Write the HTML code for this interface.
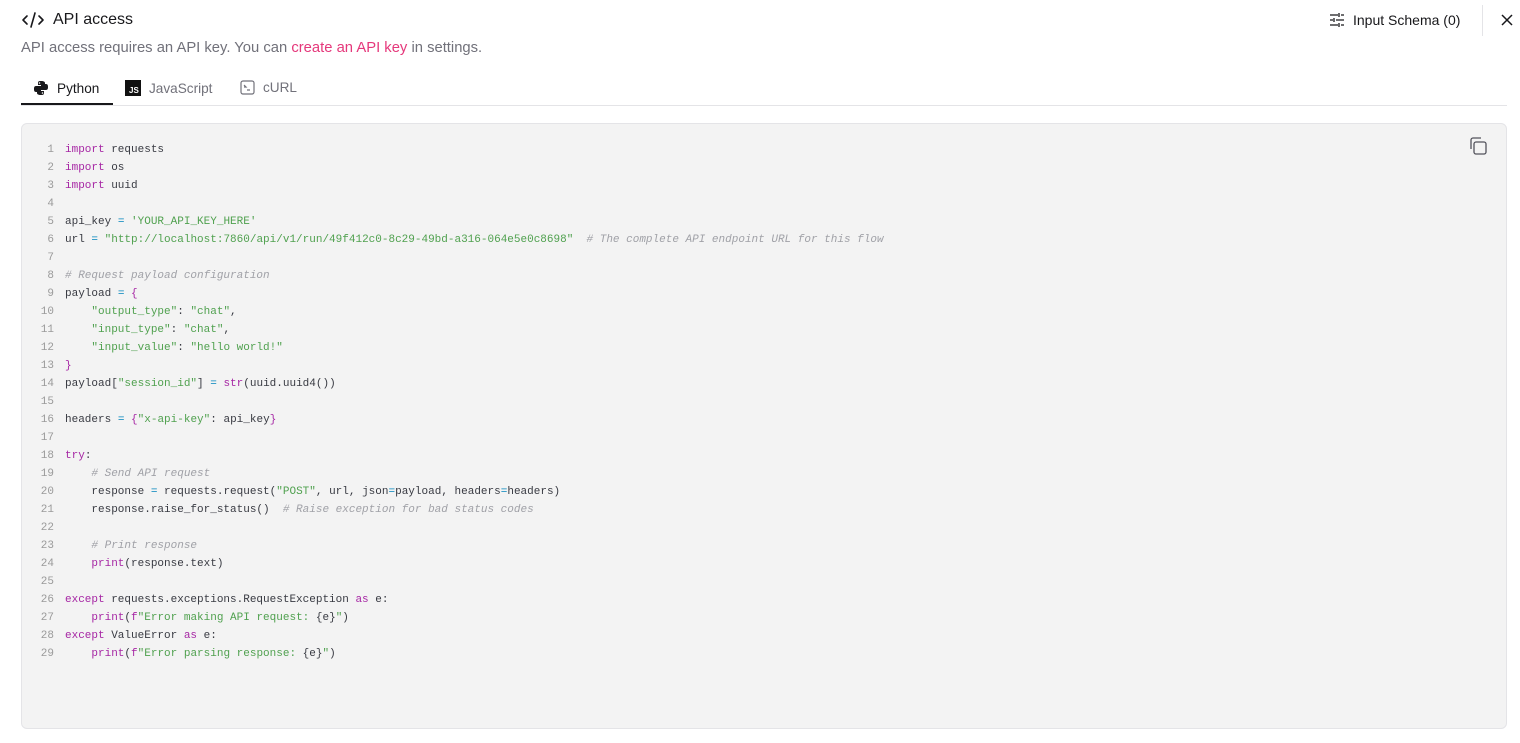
<!DOCTYPE html>
<html><head><meta charset="utf-8"><style>
*{margin:0;padding:0;box-sizing:border-box}
body{width:1520px;height:743px;background:#fff;font-family:"Liberation Sans",sans-serif;color:#18181b;position:relative;overflow:hidden}
.a{position:absolute}
.code{position:absolute;left:21px;top:123px;width:1486px;height:606px;background:#f3f3f3;border:1px solid #e4e4e7;border-radius:6px}
pre{position:absolute;left:0;top:17px;font-family:"Liberation Mono",monospace;font-size:11px;line-height:18px;color:#383a42}
.n{display:inline-block;width:32px;text-align:right;color:#9a9a9a;margin-right:11px}
.k{color:#a626a4}.s{color:#50a14f}.c{color:#a0a1a7;font-style:italic}.o{color:#0184bc}
.tab{position:absolute;top:80px;font-size:13.6px;color:#71717a;display:flex;align-items:center;gap:8px}
</style></head><body>
<svg class="a" style="left:21px;top:11px" width="24" height="18" viewBox="0 0 24 18" fill="none" stroke="#18181b" stroke-width="1.6" stroke-linecap="round" stroke-linejoin="round"><path d="M6 5 2 9l4 4M18 5l4 4-4 4M14 2 10 16"/></svg>
<div class="a" style="left:53px;top:11px;font-size:16px;color:#18181b">API access</div>
<div class="a" style="left:21px;top:40px;font-size:14.8px;color:#71717a">API access requires an API key. You can <span style="color:#e5387b">create an API key</span> in settings.</div>
<svg class="a" style="left:1329px;top:12px" width="16" height="16" viewBox="0 0 16 16" stroke="#18181b" stroke-width="1.3" fill="none"><path d="M1 3h8M12 3h3M10 1v4M1 8h3M7 8h8M5 6v4M1 13h8M12 13h3M10 11v4"/></svg>
<div class="a" style="left:1353px;top:12px;font-size:14px;color:#18181b">Input Schema (0)</div>
<div class="a" style="left:1482px;top:5px;width:1px;height:31px;background:#e4e4e7"></div>
<svg class="a" style="left:1500px;top:13px" width="14" height="14" viewBox="0 0 14 14" stroke="#18181b" stroke-width="1.5"><path d="M2 2l10 10M12 2 2 12"/></svg>
<div class="tab" style="left:33px;color:#18181b"><svg width="16" height="16" viewBox="0 0 16 16" fill="#18181b"><path d="M8 1C5 1 5 2 5 3v2h3v1H3C1 6 1 8 1 9s0 3 2 3h1v-2c0-1 1-2 2-2h4c1 0 2-1 2-2V3c0-1-1-2-4-2zM6.5 2.2a.8.8 0 110 1.6.8.8 0 010-1.6zM8 15c3 0 3-1 3-2v-2H8v-1h5c2 0 2-2 2-3s0-3-2-3h-1v2c0 1-1 2-2 2H6c-1 0-2 1-2 2v3c0 1 1 2 4 2zm1.5-1.2a.8.8 0 110-1.6.8.8 0 010 1.6z"/></svg>Python</div>
<div class="tab" style="left:125px"><span style="display:inline-block;width:16px;height:16px;background:#111;color:#fff;font-size:8px;font-weight:bold;line-height:8px;padding:7px 0 0 4px">JS</span>JavaScript</div>
<div class="tab" style="left:240px"><svg width="15" height="15" viewBox="0 0 15 15" fill="none" stroke="#71717a" stroke-width="1.2"><rect x="1" y="1" width="13" height="13" rx="2"/><path d="M4 5l2 2-2 0M7 10h3"/></svg>cURL</div>
<div class="a" style="left:21px;top:105px;width:1486px;height:1px;background:#e4e4e7"></div>
<div class="a" style="left:21px;top:103px;width:92px;height:2px;background:#18181b"></div>
<div class="code">
<svg class="a" style="left:1446px;top:12px" width="20" height="20" viewBox="0 0 20 20" fill="none" stroke="#52525b" stroke-width="1.3"><rect x="6" y="6" width="12" height="12" rx="2"/><path d="M3 13V4a2 2 0 012-2h8"/></svg>
<pre><span class="n">1</span><span class="k">import</span> requests
<span class="n">2</span><span class="k">import</span> os
<span class="n">3</span><span class="k">import</span> uuid
<span class="n">4</span>
<span class="n">5</span>api_key <span class="o">=</span> <span class="s">'YOUR_API_KEY_HERE'</span>
<span class="n">6</span>url <span class="o">=</span> <span class="s">"http://localhost:7860/api/v1/run/49f412c0-8c29-49bd-a316-064e5e0c8698"</span>  <span class="c"># The complete API endpoint URL for this flow</span>
<span class="n">7</span>
<span class="n">8</span><span class="c"># Request payload configuration</span>
<span class="n">9</span>payload <span class="o">=</span> <span class="k">{</span>
<span class="n">10</span>    <span class="s">"output_type"</span>: <span class="s">"chat"</span>,
<span class="n">11</span>    <span class="s">"input_type"</span>: <span class="s">"chat"</span>,
<span class="n">12</span>    <span class="s">"input_value"</span>: <span class="s">"hello world!"</span>
<span class="n">13</span><span class="k">}</span>
<span class="n">14</span>payload[<span class="s">"session_id"</span>] <span class="o">=</span> <span class="k">str</span>(uuid.uuid4())
<span class="n">15</span>
<span class="n">16</span>headers <span class="o">=</span> <span class="k">{</span><span class="s">"x-api-key"</span>: api_key<span class="k">}</span>
<span class="n">17</span>
<span class="n">18</span><span class="k">try</span>:
<span class="n">19</span>    <span class="c"># Send API request</span>
<span class="n">20</span>    response <span class="o">=</span> requests.request(<span class="s">"POST"</span>, url, json<span class="o">=</span>payload, headers<span class="o">=</span>headers)
<span class="n">21</span>    response.raise_for_status()  <span class="c"># Raise exception for bad status codes</span>
<span class="n">22</span>
<span class="n">23</span>    <span class="c"># Print response</span>
<span class="n">24</span>    <span class="k">print</span>(response.text)
<span class="n">25</span>
<span class="n">26</span><span class="k">except</span> requests.exceptions.RequestException <span class="k">as</span> e:
<span class="n">27</span>    <span class="k">print</span>(<span class="k">f</span><span class="s">"Error making API request: </span>{e}<span class="s">"</span>)
<span class="n">28</span><span class="k">except</span> ValueError <span class="k">as</span> e:
<span class="n">29</span>    <span class="k">print</span>(<span class="k">f</span><span class="s">"Error parsing response: </span>{e}<span class="s">"</span>)</pre>
</div>
</body></html>
